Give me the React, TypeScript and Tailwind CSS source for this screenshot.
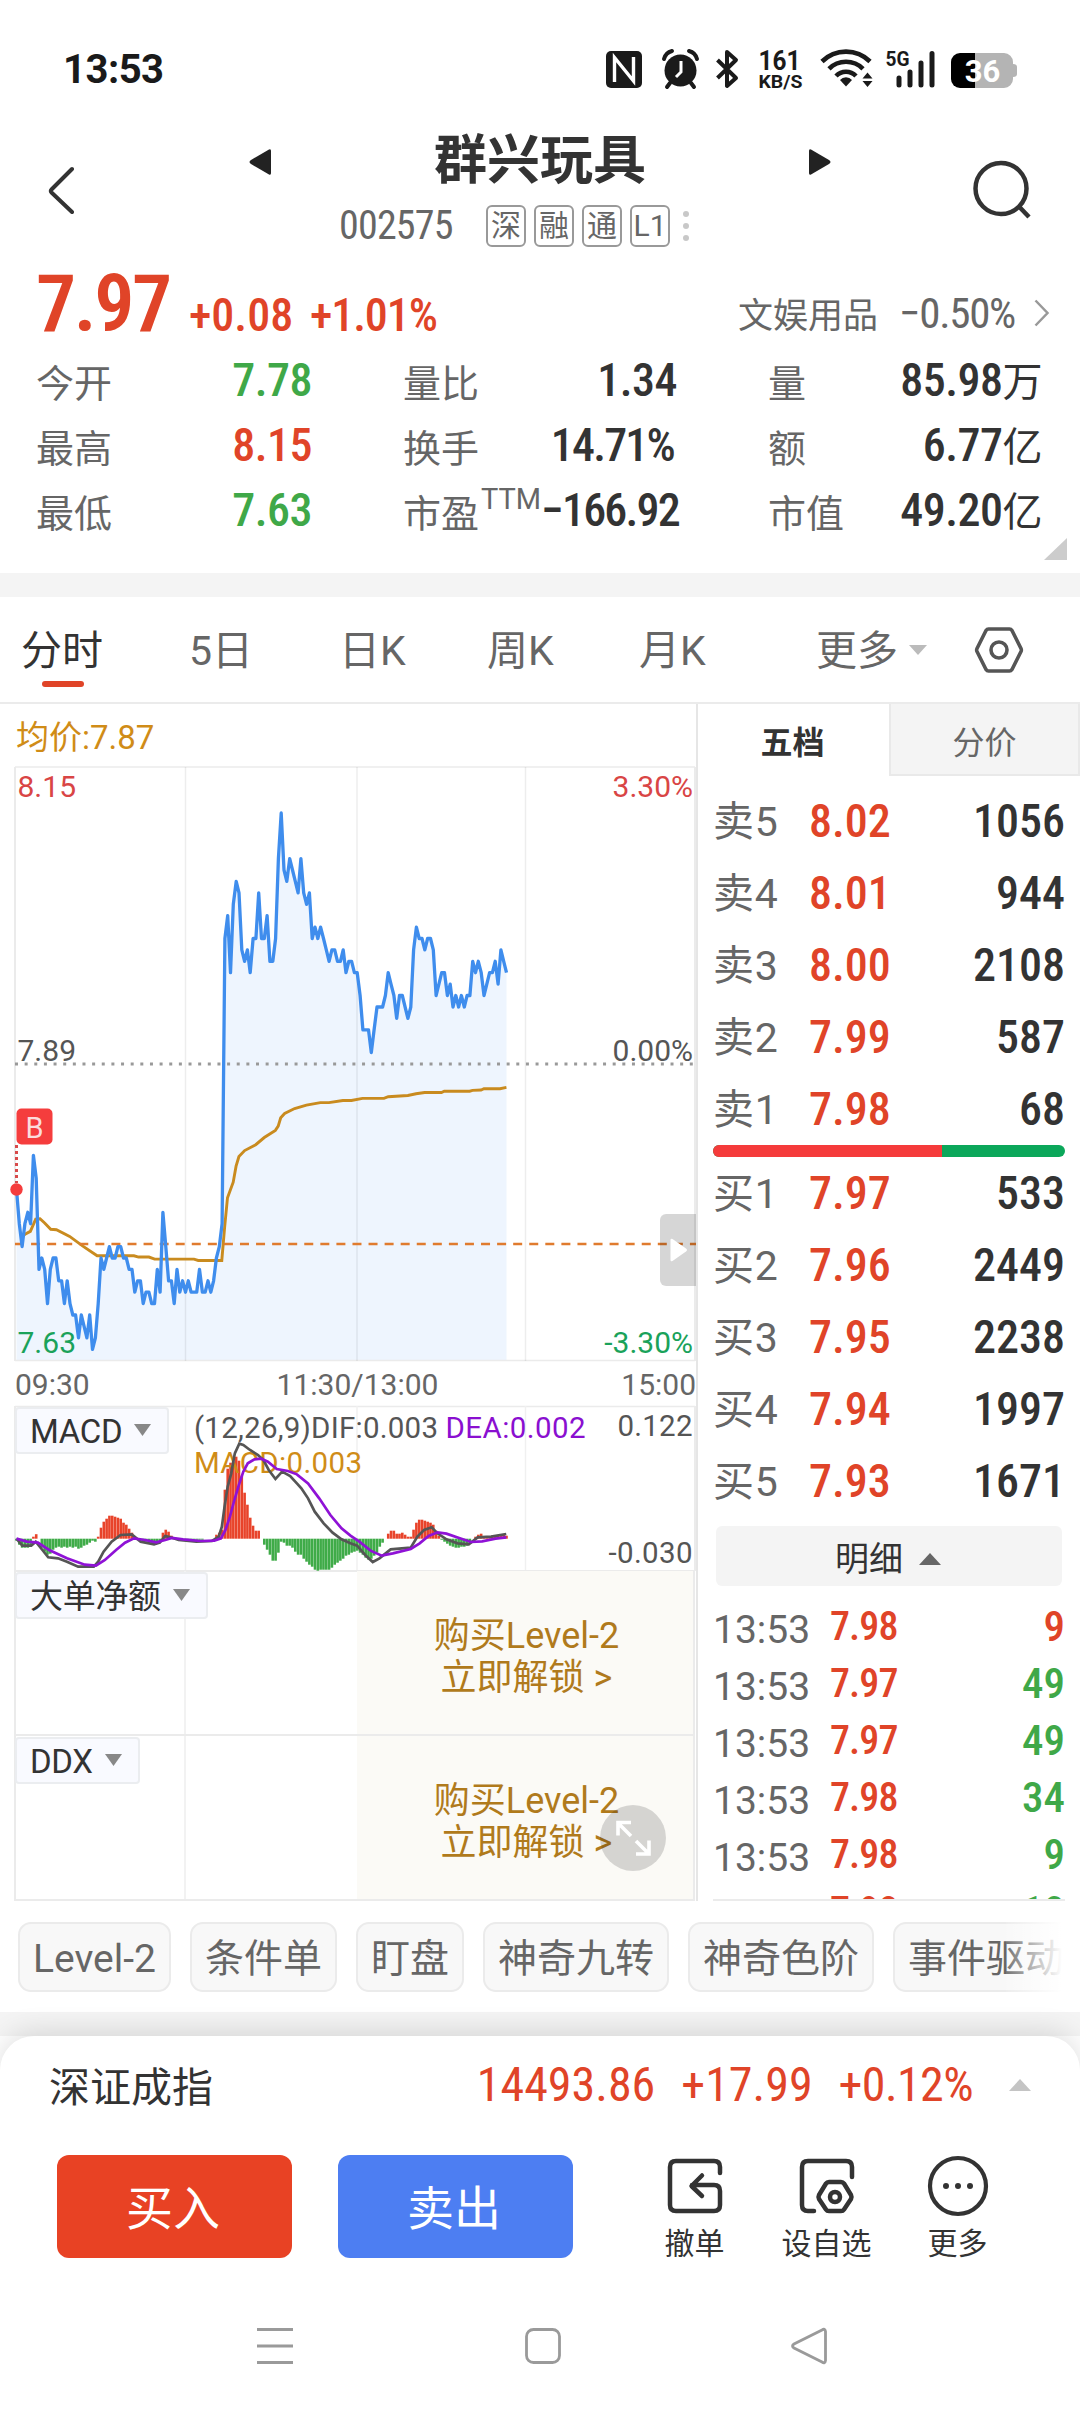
import { clsx } from "clsx";

const RED = "text-[#e04428]";
const GREEN = "text-[#3fa848]";
const DARK = "text-[#333333]";
const NUM = "font-['Roboto_Condensed','Noto_Sans_CJK_SC',sans-serif]";

interface Stat {
  label: string;
  value: string;
  color: string;
  sup?: string;
}

const stats: Stat[] = [
  { label: "今开", value: "7.78", color: GREEN },
  { label: "量比", value: "1.34", color: DARK },
  { label: "量", value: "85.98万", color: DARK },
  { label: "最高", value: "8.15", color: RED },
  { label: "换手", value: "14.71%", color: DARK },
  { label: "额", value: "6.77亿", color: DARK },
  { label: "最低", value: "7.63", color: GREEN },
  { label: "市盈", value: "-166.92", color: DARK, sup: "TTM" },
  { label: "市值", value: "49.20亿", color: DARK },
];

const sells = [
  ["卖5", "8.02", "1056"],
  ["卖4", "8.01", "944"],
  ["卖3", "8.00", "2108"],
  ["卖2", "7.99", "587"],
  ["卖1", "7.98", "68"],
];

const buys = [
  ["买1", "7.97", "533"],
  ["买2", "7.96", "2449"],
  ["买3", "7.95", "2238"],
  ["买4", "7.94", "1997"],
  ["买5", "7.93", "1671"],
];

const trades = [
  { time: "13:53", price: "7.98", qty: "9", up: true },
  { time: "13:53", price: "7.97", qty: "49", up: false },
  { time: "13:53", price: "7.97", qty: "49", up: false },
  { time: "13:53", price: "7.98", qty: "34", up: false },
  { time: "13:53", price: "7.98", qty: "9", up: false },
  { time: "13:53", price: "7.98", qty: "10", up: false },
];

const chips = ["Level-2", "条件单", "盯盘", "神奇九转", "神奇色阶", "事件驱动"];

// price per minute, in cents from the previous close (7.89)
const ticks = [
  -11, -14, -16, -14, -13, -14, -8, -10, -18, -17, -18, -21, -18, -17, -17, -19, -19, -21, -19, -21,
  -22, -22, -24, -22, -23, -24, -22, -25, -24, -21, -17, -18, -17, -16, -17, -17, -16, -16, -17, -17,
  -18, -18, -20, -19, -19, -21, -20, -20, -21, -21, -18, -20, -13, -16, -19, -19, -21, -18, -20, -19,
  -20, -19, -20, -20, -20, -18, -20, -20, -19, -20, -19, -17, -16, -14, 11, 13, 8, 14, 16, 15,
  10, 9, 10, 8, 11, 11, 15, 11, 11, 13, 9, 9, 11, 18, 22, 17, 16, 18, 17, 16,
  15, 18, 15, 14, 15, 11, 12, 11, 12, 11, 10, 9, 10, 10, 9, 9, 10, 8, 9, 9,
  8, 8, 6, 3, 3, 3, 1, 3, 5, 5, 5, 6, 8, 7, 6, 4, 6, 6, 5, 4,
  5, 10, 12, 11, 11, 10, 11, 11, 10, 6, 7, 8, 8, 6, 7, 5, 6, 5, 6, 5,
  6, 6, 9, 8, 9, 8, 6, 7, 8, 8, 9, 7, 10, 9, 8,
];

const histogram = [
  -2, -6, -9, -9, -9, -7, 2, 4.5, 0, -9, -13, -16, -15, -11, -9, -8, -9, -8, -9, -8,
  -9, -8, -10, -9, -7, -6, -4, -2, -3, 2, 11, 17, 20, 23, 23, 22, 21, 20, 16, 14,
  10, 6, 1, -1, -2, -3, -3, -4, -5, -5, -4, -3, 6, 9, 7, 3, 0, -1, -1, -2,
  -1, -1, -1, -1, -1, -1, -1, 0, 0, 0, 0, 4, 6, 9, 49, 70, 76, 76, 82, 78,
  63, 46, 34, 21, 13, 8, 8, 0, -6, -11, -16, -22, -22, -14, -3, -4, -7, -7, -9, -13,
  -16, -16, -20, -23, -26, -28, -31, -32, -31, -31, -31, -31, -29, -26, -24, -22, -20, -17, -16, -14,
  -13, -12, -14, -16, -19, -21, -20, -17, -14, -8, -4, 0, 5, 8, 8, 5, 5, 6, 4, 2,
  2, 9, 16, 19, 19, 18, 17, 16, 14, 8, 3, -1, -3, -5, -7, -8, -9, -9, -8, -8,
  -7, -5, 0, 2, 4, 5, 2, 2, 2, 3, 2, 3, 4, 4, 3,
];

const X0 = 16.5;
const X1 = 506.5;
const GRID = [185.5, 357, 525.5];

const pricePoints = ticks
  .map((t, i) => `${(X0 + (i * (X1 - X0)) / (ticks.length - 1)).toFixed(1)},${(1064 - t * 11.41).toFixed(1)}`)
  .join(" ");

const avgPoints =
  "62,1132 70,1127 85,1120 100,1091 112,1090 125,1100 142,1115 158,1116 195,1132 232,1155 272,1178 375,1178 388,1181 417,1181 433,1186 543,1186 555,1189 621,1189 629,1110 637,1040 653,1003 661,965 669,942 685,928 716,914 740,897 771,880 779,870 786,850 797,840 825,828 858,820 897,814 921,814 960,809 984,809 1015,804 1075,804 1087,800 1142,797 1165,793 1189,790 1236,790 1244,787 1315,787 1323,785 1347,784 1355,781 1400,781 1418,778";

const difPoints =
  "37,416 50,437 70,437 80,425 95,450 108,472 130,475 150,485 175,500 210,500 220,485 232,455 250,425 270,405 295,403 315,425 345,433 358,428 370,408 382,412 400,420 440,425 475,423 490,410 497,380 503,320 510,260 518,220 526,160 536,131 545,135 560,150 578,165 590,180 602,210 617,237 632,215 650,228 665,250 675,265 690,295 705,335 725,370 745,398 765,418 785,430 800,437 818,465 835,486 850,475 875,448 920,443 935,410 950,390 967,382 980,400 1000,418 1025,430 1050,433 1070,412 1100,410 1134,402";

const deaPoints =
  "37,416 60,425 85,428 110,450 150,475 190,494 215,497 235,480 260,450 280,428 300,415 325,420 350,427 370,420 385,414 410,418 450,423 480,422 495,415 505,390 515,350 525,300 535,255 545,215 555,190 570,178 585,176 600,185 620,207 645,213 665,223 690,250 715,295 740,345 765,385 785,407 805,425 830,452 855,467 880,460 920,447 940,430 960,408 980,397 1000,401 1030,415 1055,426 1080,424 1110,416 1134,412";

function StatusBar() {
  return (
    <div className="flex h-[120px] items-center justify-between pt-5 pr-[62px] pl-[63px]">
      <span className="text-[40px] leading-none font-bold tracking-[-0.5px] text-[#1a1a1a]">13:53</span>
      <svg width="412" height="62" viewBox="605 40 412 62" fill="none" stroke="#1a1a1a" className="overflow-visible">
        <rect x="605" y="52" width="36" height="37" rx="5" fill="#1a1a1a" stroke="none" />
        <path d="M613.5 83V58.5L632.5 82V58" stroke="#fff" strokeWidth="3.4" />
        <circle cx="679.500" cy="71.500" r="16" fill="#1a1a1a" stroke="none" />
        <path d="M663 60c1-4 4-7 8-8M696 60c-1-4-4-7-8-8M669 84l-3 4M690 84l3 4" strokeWidth="4" strokeLinecap="round" />
        <path d="M680 62v11l-5 5" stroke="#fff" strokeWidth="3" />
        <path d="M716.500 61l18.500 18-9 8V53l9 8-18.500 18" strokeWidth="4" strokeLinejoin="round" />
        <text x="757.500" y="70.500" fontSize="27" fontWeight="700" fill="#1a1a1a" stroke="none" textLength="42" lengthAdjust="spacingAndGlyphs">161</text>
        <text x="757.500" y="88.500" fontSize="18" fontWeight="700" fill="#1a1a1a" stroke="none" textLength="44" lengthAdjust="spacingAndGlyphs">KB/S</text>
        <g strokeWidth="4.600">
          <path d="M821 62.500a34 34 0 0 1 48 0" />
          <path d="M828 69.800a24 24 0 0 1 34 0" />
          <path d="M835 77a14 14 0 0 1 20 0" />
        </g>
        <path d="M839 81a8 8 0 0 1 12 0l-6 6.500z" fill="#1a1a1a" stroke="none" />
        <path d="M861.500 79.500l5-6 5 6zM861.500 82l5 6 5-6z" fill="#1a1a1a" stroke="none" />
        <text x="884.500" y="67" fontSize="21" fontWeight="700" fill="#1a1a1a" stroke="none" textLength="24" lengthAdjust="spacingAndGlyphs">5G</text>
        <g strokeWidth="5" strokeLinecap="round">
          <path d="M898 79v7M909 73v13M920 64v22M931 54.500v31.500" />
        </g>
        <path d="M959 54h44a9 9 0 0 1 9 9v17a9 9 0 0 1-9 9h-29V54z" fill="#b4b4b4" stroke="none" />
        <path d="M1012 65q4 0 4 3v7q0 3-4 3z" fill="#b4b4b4" stroke="none" />
        <path d="M974 54h-15a9 9 0 0 0-9 9v17a9 9 0 0 0 9 9h15z" fill="#000" stroke="none" />
        <text x="981.500" y="82.500" textAnchor="middle" fontSize="31" fontWeight="700" fill="#fff" stroke="none">36</text>
      </svg>
    </div>
  );
}

function Header() {
  return (
    <div className="flex h-[142px]">
      <div className="w-[249px] pt-[46px] pl-[46px]">
        <svg width="30" height="48" viewBox="0 0 30 48" fill="none" stroke="#333" strokeWidth="4" strokeLinecap="round" strokeLinejoin="round">
          <path d="M26 3L5.500 23.500Q4 25 5.500 26.500L26 46" />
        </svg>
      </div>
      <div className="w-[582px]">
        <div className="flex h-[80px] items-center justify-between">
          <svg width="22" height="28" viewBox="0 0 22 28" className="mt-1">
            <path d="M20 1.500q2-1 2 1.500v22q0 2.500-2 1.500L2 16q-3-2 0-4z" fill="#222" />
          </svg>
          <h1 className="pt-[3px] text-[53px] leading-none font-bold text-[#333333]">群兴玩具</h1>
          <svg width="22" height="28" viewBox="0 0 22 28" className="mt-1">
            <path d="M2 1.500Q0 .5 0 3v22q0 2.500 2 1.500L20 16q3-2 0-4z" fill="#222" />
          </svg>
        </div>
        <div className="flex h-[52px] items-center pl-[90px] text-[#666666]">
          <span className={clsx(NUM, "w-[147px] text-[40px] leading-none tracking-[-0.8px]")}>002575</span>
          <div className="flex gap-2">
            {["深", "融", "通", "L1"].map((t) => (
              <span key={t} className="flex h-[42px] w-10 items-center justify-center rounded-[6px] border-2 border-[#999999] text-[30px] leading-none">
                {t}
              </span>
            ))}
          </div>
          <div className="ml-[13px] flex flex-col gap-1.5">
            <i className="size-1.5 rounded-full bg-[#c8c8c8]" />
            <i className="size-1.5 rounded-full bg-[#c8c8c8]" />
            <i className="size-1.5 rounded-full bg-[#c8c8c8]" />
          </div>
        </div>
      </div>
      <div className="pt-[39px] pl-[141px]">
        <svg width="60" height="62" viewBox="0 0 60 62" fill="none" stroke="#333" strokeWidth="4.500">
          <circle cx="29" cy="29.500" r="25.500" />
          <path d="M46.500 47l10.500 11" />
        </svg>
      </div>
    </div>
  );
}

function Quote() {
  return (
    <div className="relative h-[311px] pt-0.5">
      <div className="flex h-[83px] items-baseline pr-[30px] pl-[36px]">
        <span className={clsx(NUM, RED, "w-[153px] text-[80px] leading-[80px] font-semibold tracking-[-2.4px]")}>7.97</span>
        <span className={clsx(NUM, RED, "w-[121px] text-[46px] font-medium")}>+0.08</span>
        <span className={clsx(NUM, RED, "text-[46px] font-medium tracking-[-1.1px]")}>+1.01%</span>
        <div className="ml-auto flex h-[98px] items-center self-start text-[#666666]">
          <span className="pt-1.5 text-[35px] leading-none">文娱用品</span>
          <span className={clsx(NUM, "ml-[21px] text-[43px] leading-none tracking-[-1.3px]")}>−0.50%</span>
          <svg width="16" height="28" viewBox="0 0 16 28" className="ml-[19px]" fill="none" stroke="#999" strokeWidth="2.500">
            <path d="M1.500 1.500l12 12.500-12 12.500" />
          </svg>
        </div>
      </div>
      <div className="grid grid-cols-[276px_274px_274px] gap-x-[91px] pl-[36px]">
        {stats.map((s) => (
          <div key={s.label} className="flex h-[65px] items-center justify-between">
            <span className="flex shrink-0 pt-2 text-[38px] leading-none whitespace-nowrap text-[#666666]">
              {s.label}
              {s.sup && <sup className="top-0 -mt-2.5 ml-0.5 text-[29px] leading-none">{s.sup}</sup>}
            </span>
            <span
              className={clsx(
                NUM,
                s.color,
                /[%-]/.test(s.value) ? "pr-[3px] tracking-[-1.8px]" : "tracking-[-0.5px]",
                "text-[46px] leading-none font-medium whitespace-nowrap"
              )}
            >
              {s.value.replace(/[万亿]/, "").replace("-", "−")}
              <span className="text-[40px] font-normal">{s.value.match(/[万亿]/)?.[0]}</span>
            </span>
          </div>
        ))}
      </div>
      <svg width="24" height="23" viewBox="0 0 24 23" className="absolute right-3 bottom-[12px]">
        <path d="M23 0v22H0z" fill="#ccc" />
      </svg>
    </div>
  );
}

function PeriodTabs() {
  return (
    <div className="flex h-[107px] items-center border-b-2 border-[#ebebeb] pt-1 text-[41px] leading-none text-[#666666]">
      <div className="relative ml-[21px] w-[168px] text-[#333333]">
        分时
        <i className="absolute -bottom-[15px] left-[21px] h-1.5 w-[42px] rounded-full bg-[#e04428]" />
      </div>
      <span className="w-[150px]">5日</span>
      <span className="w-[148px]">日K</span>
      <span className="w-[152px]">周K</span>
      <span className="w-[177px]">月K</span>
      <span>更多</span>
      <svg width="18" height="10" viewBox="0 0 18 10" className="-mt-1 ml-[11px]">
        <path d="M0 0h18L9 10z" fill="#bbb" />
      </svg>
      <svg width="50" height="48" viewBox="0 0 50 48" className="-mt-1 ml-[47px]" fill="none" stroke="#555" strokeWidth="3.600" strokeLinejoin="round">
        <path d="M14.500 3h21q1.500 0 2.500 1.500L47 22.500q.7 1.500 0 3L38 43.500Q37 45 35.500 45h-21q-1.500 0-2.500-1.500L3 25.500q-.7-1.500 0-3L12 4.500Q13 3 14.500 3z" />
        <circle cx="25" cy="24" r="8" />
      </svg>
    </div>
  );
}

function PriceChart() {
  return (
    <svg width="696" height="596" viewBox="0 766 696 596" className="block" fontSize="30">
      <polygon points={`${X0},1360 ${pricePoints} ${X1},1360`} fill="#eef5fe" />
      <g stroke="#ebebeb" strokeWidth="1.500">
        <path d="M15 767h680M15 1360.500h680" />
        <path d="M15 767v594M695 767v594" strokeWidth="2" />
        {GRID.map((x) => (
          <path key={x} d={`M${x} 767v594`} stroke="#000" strokeOpacity=".07" />
        ))}
      </g>
      <path d="M15 1064h680" stroke="#999" strokeWidth="3" strokeDasharray="3 6.640" />
      <g transform="translate(0 760) scale(.35714 .42088)">
        <polyline points={avgPoints} fill="none" stroke="#c98b1f" strokeWidth="2.900" vectorEffect="non-scaling-stroke" />
      </g>
      <path d="M15 1244h681" stroke="#e07b2e" strokeWidth="2.400" strokeDasharray="9 7.070" />
      <polyline points={pricePoints} fill="none" stroke="#3f8ded" strokeWidth="3.300" strokeLinejoin="round" />
      <path d="M16.500 1145v38" stroke="#d84a4a" strokeWidth="3" strokeDasharray="3 3" />
      <circle cx="16.500" cy="1189.500" r="6.200" fill="#f53d3d" />
      <rect x="16.500" y="1108.500" width="36" height="36" rx="5" fill="#f53d3d" />
      <text x="34.500" y="1137.500" textAnchor="middle" fontSize="29" fill="#fcdcdc">B</text>
      <text x="17.500" y="797" fill="#d94545">8.15</text>
      <text x="693" y="797" textAnchor="end" fill="#d94545">3.30%</text>
      <text x="17.500" y="1061" fill="#555">7.89</text>
      <text x="693" y="1061" textAnchor="end" fill="#555">0.00%</text>
      <text x="17.500" y="1352.500" fill="#1aa25a">7.63</text>
      <text x="693" y="1352.500" textAnchor="end" fill="#1aa25a">-3.30%</text>
      <path d="M696 1214h-30a6 6 0 0 0-6 6v60a6 6 0 0 0 6 6h30z" fill="#000" fillOpacity=".16" />
      <path d="M670.500 1240q0-2 2-1l13.500 9.500q2 1.500 0 3l-13.500 9.500q-2 1-2-1z" fill="#fff" />
    </svg>
  );
}

function IndicatorChip({ name }: { name: string }) {
  return (
    <button className="absolute top-px left-[15px] flex h-[47px] items-center gap-3 rounded-[4px] border-2 border-[#ebedf0] bg-[#f9faff] pt-0.5 pr-4 pl-[13px] text-[33px] leading-none tracking-[-0.3px] text-[#333333]">
      {name}
      <svg width="17" height="12" viewBox="0 0 17 12" className="-mt-1">
        <path d="M0 0h17L8.500 12z" fill="#888" />
      </svg>
    </button>
  );
}

function MacdPanel() {
  return (
    <div className="relative h-[165px]">
      <svg width="696" height="165" viewBox="0 1406 696 165" className="block overflow-visible" fontSize="29.500">
        <g stroke="#ebebeb" strokeWidth="1.500">
          <path d="M15 1406.500h680" />
          <path d="M15 1406v165M695 1406v165" strokeWidth="2" />
          {GRID.map((x) => (
            <path key={x} d={`M${x} 1406v165`} stroke="#f0f0f0" />
          ))}
          <path d="M15 1571h680" strokeWidth="2" />
        </g>
        {histogram.map((h, i) => (
          <rect
            key={i}
            x={X0 + (i * (X1 - X0)) / (histogram.length - 1) - 1.3}
            y={h > 0 ? 1538.7 - h : 1538.7}
            width="2.600"
            height={Math.abs(h)}
            fill={h > 0 ? "#e8432a" : "#3fab48"}
          />
        ))}
        <text x="194" y="1437.500" fill="#555" textLength="244">(12,26,9)DIF:0.003</text>
        <text x="445.500" y="1437.500" fill="#8a0fd0" textLength="140">DEA:0.002</text>
        <text x="194" y="1473" fill="#d08c17" textLength="168">MACD:0.003</text>
        <text x="692.500" y="1436" textAnchor="end" fill="#555" textLength="75">0.122</text>
        <text x="692.500" y="1562.500" textAnchor="end" fill="#555" textLength="84">-0.030</text>
        <g transform="translate(0 1400) scale(.44643 .33333)" fill="none" strokeWidth="2.700">
          <polyline points={difPoints} stroke="#555" vectorEffect="non-scaling-stroke" />
          <polyline points={deaPoints} stroke="#8f12d6" vectorEffect="non-scaling-stroke" />
        </g>
      </svg>
      <IndicatorChip name="MACD" />
    </div>
  );
}

function LockedPanel({ name }: { name: string }) {
  return (
    <div className="relative flex h-[165px] pl-[14px]">
      <div className="flex w-[681px] border-x-2 border-b-2 border-[#ebebeb]">
        <div className="w-[170px] border-r-2 border-[#f2f2f2]" />
        <div className="w-[171px]" />
        <div className="flex flex-1 flex-col items-center bg-[#fbfaf6] pt-[44px] pl-[3px] text-[36px] leading-[42px] text-[#b07a1c]">
          <span>购买Level-2</span>
          <span>立即解锁 &gt;</span>
        </div>
      </div>
      <IndicatorChip name={name} />
    </div>
  );
}

function DepthRow({ row }: { row: string[] }) {
  return (
    <div className="flex h-[72px] items-center pr-[15px] pl-[15px]">
      <span className="w-[96px] pt-0.5 text-[41px] leading-none tracking-[0.8px] text-[#666666]">{row[0]}</span>
      <span className={clsx(NUM, RED, "text-[46px] leading-none font-medium")}>{row[1]}</span>
      <span className={clsx(NUM, "ml-auto text-[46px] leading-none font-medium text-[#333333]")}>{row[2]}</span>
    </div>
  );
}

function OrderBook() {
  return (
    <div className="h-[1197px] flex-1 overflow-hidden">
      <div className="flex h-[72px] text-[32px] leading-none">
        <span className="flex w-[191px] items-center justify-center pt-1.5 pr-0.5 font-bold text-[#333333]">五档</span>
        <span className="flex flex-1 items-center justify-center border-2 border-t-0 border-[#e9e9e9] bg-[#f4f4f4] pt-2 text-[#666666]">分价</span>
      </div>
      <div className="mt-[9px]">
        {sells.map((r) => (
          <DepthRow key={r[0]} row={r} />
        ))}
      </div>
      <div className="mr-[15px] ml-[15px] flex h-3 overflow-hidden rounded-full bg-[#0ba75a]">
        <div className="w-[65%] bg-[#f53b3b]" />
      </div>
      {buys.map((r) => (
        <DepthRow key={r[0]} row={r} />
      ))}
      <div className="mt-[9px] mr-[18px] mb-[11px] ml-[18px] flex h-[60px] items-center justify-center gap-4 rounded-[6px] bg-[#f4f4f4] pt-1.5 pr-0.5 text-[34px] leading-none text-[#333333]">
        明细
        <svg width="22" height="12" viewBox="0 0 22 12">
          <path d="M0 12L11 0l11 12z" fill="#666" />
        </svg>
      </div>
      <div className="mr-[15px] ml-[15px] h-[304px] overflow-hidden border-b-2 border-[#ebebeb]">
        {trades.map((t, i) => (
          <div key={i} className="flex h-[57px] items-center">
            <span className="w-[117px] pt-[9px] text-[39px] leading-none text-[#666666]">{t.time}</span>
            <span className={clsx(NUM, RED, "pt-0.5 text-[40px] leading-none font-medium tracking-[-0.9px]")}>{t.price}</span>
            <span className={clsx(NUM, t.up ? RED : GREEN, "ml-auto pt-0.5 text-[43px] leading-none font-medium")}>{t.qty}</span>
          </div>
        ))}
      </div>
    </div>
  );
}

function BottomCard() {
  return (
    <div className="relative h-[376px] rounded-t-[34px] bg-white shadow-[0_-4px_28px_rgba(0,0,0,0.13)]">
      <div className={clsx(NUM, RED, "flex h-[98px] items-center pr-[48px] pl-[49px] text-[48px] leading-none")}>
        <span className="mr-auto pt-1.5 text-[41px] text-[#333333]">深证成指</span>
        <span>14493.86</span>
        <span className="ml-[26px]">+17.99</span>
        <span className="ml-[26px] tracking-[-0.6px]">+0.12%</span>
        <svg width="24" height="12" viewBox="0 0 24 12" className="ml-[35px]">
          <path d="M1 12L12 0l11 12z" fill="#c4c4c4" />
        </svg>
      </div>
      <div className="mt-[21px] flex pl-[57px] text-[#333333]">
        <button className="h-[103px] w-[235px] rounded-[12px] bg-[#e84224] pt-[3px] pr-[3px] text-[47px] leading-none text-white">买入</button>
        <button className="ml-[46px] h-[103px] w-[235px] rounded-[12px] bg-[#4d7ef2] pt-[3px] pr-[3px] text-[47px] leading-none text-white">卖出</button>
        <div className="ml-[62px] flex w-[119px] flex-col items-center">
          <svg width="62" height="62" viewBox="0 0 62 62" fill="none" stroke="#333" strokeWidth="4.500" strokeLinejoin="round" strokeLinecap="round">
            <path d="M56 18v-6q0-6-6-6H12q-6 0-6 6v38q0 6 6 6h38q6 0 6-6V36q0-6-6-6H28M38 20.500L27.500 31 38 41" />
          </svg>
          <span className="mt-3 text-[30px] leading-none">撤单</span>
        </div>
        <div className="flex w-[145px] flex-col items-center">
          <svg width="62" height="62" viewBox="0 0 62 62" fill="none" stroke="#333" strokeWidth="4.500" strokeLinejoin="round" strokeLinecap="round">
            <path d="M56 22V12q0-6-6-6H12q-6 0-6 6v38q0 6 6 6h6" />
            <path d="M33 27h12q2 0 3 1.500l7 11.500q1 2 0 4L48 54.500q-1 1.500-3 1.500H33q-2 0-3-1.500L23 44q-1-2 0-4l7-11.500q1-1.500 3-1.500z" />
            <circle cx="39" cy="42" r="5" />
          </svg>
          <span className="mt-3 text-[30px] leading-none">设自选</span>
        </div>
        <div className="flex w-[117px] flex-col items-center">
          <svg width="62" height="62" viewBox="0 0 62 62" fill="none" stroke="#333" strokeWidth="4.200">
            <circle cx="31" cy="31" r="28" />
            <g fill="#333" stroke="none">
              <circle cx="19" cy="31" r="3" />
              <circle cx="31" cy="31" r="3" />
              <circle cx="43" cy="31" r="3" />
            </g>
          </svg>
          <span className="mt-3 text-[30px] leading-none">更多</span>
        </div>
      </div>
      <div className="mt-[67px] flex pl-[257px]">
        <svg width="570" height="40" viewBox="257 0 570 40" fill="none" stroke="#9a9a9a" strokeWidth="2.800">
          <path d="M257 3.500h36M257 20h36M257 36.500h36" />
          <rect x="526.500" y="3.500" width="33" height="33" rx="7" />
          <path d="M822 4q3-2 3.500 1.500v29q-.5 3.500-3.500 1.500L794 22q-3-2 0-4z" />
        </svg>
      </div>
    </div>
  );
}

export default function App() {
  return (
    <div className="h-[2412px] w-[1080px] overflow-hidden bg-white font-['Roboto','Noto_Sans_CJK_SC',sans-serif]">
      <StatusBar />
      <Header />
      <Quote />
      <div className="h-6 bg-[#f4f4f4]" />
      <PeriodTabs />
      <div className="flex">
        <div className="relative w-[698px] border-r-2 border-[#e6e6e6]">
          <div className="flex h-[62px] items-center pt-1 pl-4 text-[33px] leading-none text-[#d08c17]">均价:7.87</div>
          <PriceChart />
          <div className="grid h-[44px] grid-cols-3 items-center pt-0.5 pl-[15px] text-[30px] leading-none text-[#666666]">
            <span>09:30</span>
            <span className="pl-1 text-center">11:30/13:00</span>
            <span className="text-right">15:00</span>
          </div>
          <MacdPanel />
          <LockedPanel name="大单净额" />
          <LockedPanel name="DDX" />
          <div className="absolute right-[30px] bottom-[30px] size-[66px] rounded-full bg-black/15">
            <svg width="66" height="66" viewBox="0 0 66 66" fill="none" stroke="#fff" strokeWidth="3.600">
              <path d="M31 17.500H18v13M18 18l13 13M36 36l13 13M49 35.500V49H36" />
            </svg>
          </div>
        </div>
        <OrderBook />
      </div>
      <div className="relative mr-[18px] flex h-[111px] gap-[19px] overflow-hidden pt-[21px] pl-[18px]">
        {chips.map((c) => (
          <span key={c} className="flex h-[70px] shrink-0 items-center rounded-[13px] border-2 border-[#ebebeb] bg-[#f8f8f8] px-[13px] pt-1 text-[39px] leading-none text-[#666666]">
            {c}
          </span>
        ))}
        <div className="absolute top-0 right-0 h-full w-[56px] bg-linear-to-r from-white/10 to-white" />
      </div>
      <div className="h-6 bg-[#f4f4f4]" />
      <BottomCard />
    </div>
  );
}
